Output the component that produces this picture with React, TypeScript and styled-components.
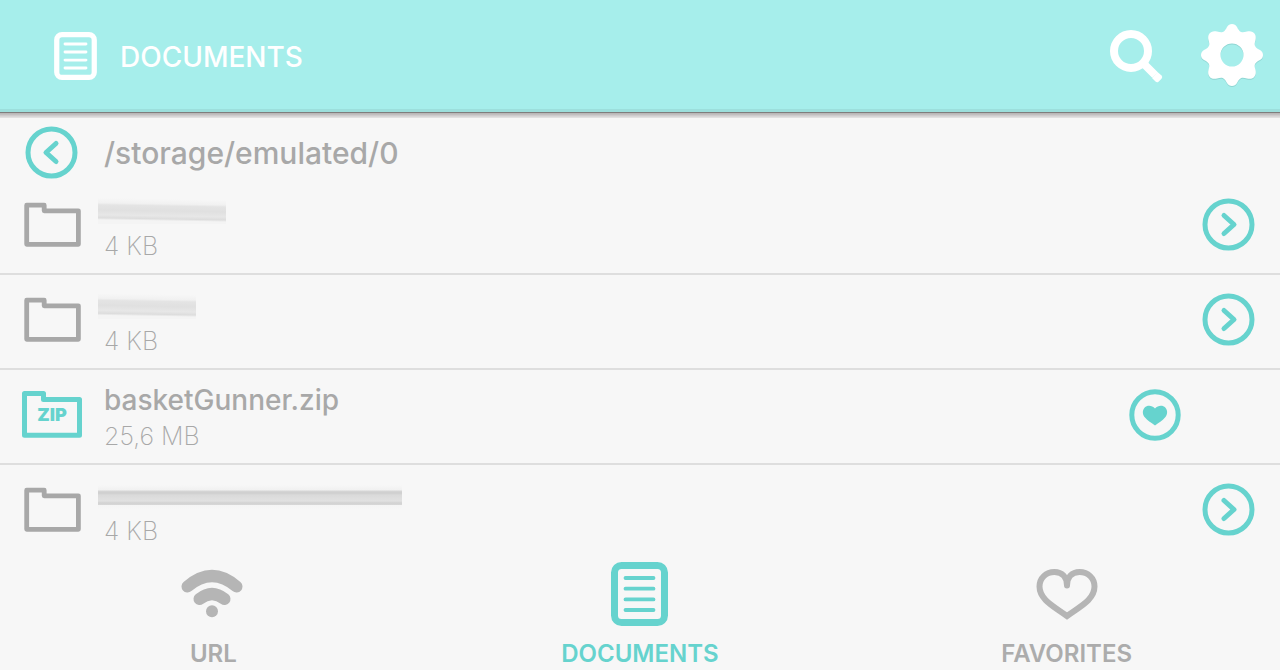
import React from "react";
import styled, { createGlobalStyle } from "styled-components";

const TEAL = "#66d3ce";
const GRAY = "#a8a8a8";

const GlobalStyle = createGlobalStyle`
  * { box-sizing: border-box; }
  body { margin: 0; background: #f7f7f7; font-family: Inter, "Liberation Sans", sans-serif; }
`;

const Page = styled.div`
  min-height: 100vh;
  display: flex;
  flex-direction: column;
  background: #f7f7f7;
  color: ${GRAY};
`;

const Header = styled.header`
  display: flex;
  align-items: center;
  height: 113px;
  padding: 0 16px 0 54px;
  background: linear-gradient(#a6eeeb, #a6eeeb) 0 0 / 100% 109px no-repeat #9cdfdc;
  border-bottom: 1px solid #7f7d7d;
  box-shadow: 0 1px 0 #b9b7b7, 0 2px 0 #c1bfc0, 0 3px 0 #cdcbcc, 0 4px 0 #d8d6d7, 0 5px 0 #e2e1e1;
  color: #fff;
`;

const Title = styled.h1`
  flex: 1;
  margin: 0 0 0 23px;
  padding-top: 2px;
  font-size: 28px;
  line-height: 36px;
  font-weight: 500;
`;

const IconButton = styled.button`
  display: block;
  flex: none;
  padding: 0;
  border: 0;
  background: none;
  color: inherit;
  cursor: pointer;
  svg { display: block; }
`;

const HeaderActions = styled.div`
  display: flex;
  align-items: center;
  gap: 37px;
`;

const PathBar = styled.div`
  display: flex;
  align-items: flex-start;
  gap: 26px;
  height: 67px;
  padding: 13px 25px 0;
`;

const PathText = styled.div`
  font-size: 30px;
  line-height: 54px;
  font-weight: 500;
`;

const FileList = styled.ul`
  flex: 1;
  margin: 0;
  padding: 0;
  list-style: none;
`;

const Row = styled.li`
  display: flex;
  height: 95px;
  padding: 12px 25px 0 21px;
  border-bottom: 2px solid #dedede;
  &:last-child { height: 93px; border-bottom: 0; }
`;

const Thumb = styled.div`
  flex: none;
  width: 62px;
  padding-top: 8px;
  svg { display: block; }
`;

const Info = styled.div`
  flex: 1;
  padding-left: 21px;
`;

const FileName = styled.div`
  height: 36px;
  font-size: 28px;
  line-height: 36px;
  font-weight: 500;
`;

const FileSize = styled.div`
  font-size: 25px;
  line-height: 36px;
  font-weight: 200;
`;

const Redacted = styled.span<{ $width: number; $dark?: boolean }>`
  display: block;
  width: ${(p) => p.$width}px;
  height: 32px;
  margin-left: -6px;
  background: ${(p) =>
    p.$dark
      ? "linear-gradient(180deg, #f7f7f7 8px, #f1f1f1 13px, #d6d6d6 14px, #cecece 16px, #dadada 18px, #e1e1e1 24px, #d2d2d2 26px, #d8d8d8 28px, #f5f5f5 28px, #f7f7f7 32px)"
      : "linear-gradient(181deg, #f7f7f7 8px, #f1f1f1 13px, #e4e4e4 15px, #e0e0e0 20px, #e7e7e7 25px, #dddddd 28px, #f4f4f4 30px)"};
`;

const Actions = styled.div<{ $inset?: boolean }>`
  flex: none;
  padding-top: 6px;
  margin-right: ${(p) => (p.$inset ? 74 : 0)}px;
  color: ${TEAL};
`;

const Nav = styled.nav`
  display: grid;
  grid-template-columns: repeat(3, 1fr);
  height: 112px;
  padding-top: 4px;
`;

const Tab = styled.a<{ $active?: boolean }>`
  display: flex;
  flex-direction: column;
  align-items: center;
  gap: 14px;
  color: ${(p) => (p.$active ? TEAL : "#acacac")};
  font-size: 24px;
  line-height: 28px;
  font-weight: 600;
  text-decoration: none;
`;

const DocIcon = ({ width, height }: { width: number; height: number }) => (
  <svg width={width} height={height} viewBox="0 0 57 64" fill="none" stroke="currentColor" aria-hidden="true">
    <rect x="3.5" y="3.5" width="50" height="57" rx="7" strokeWidth="7" />
    <path d="M14.5 16H42.5M14.5 26.7H42.5M14.5 37.4H42.5M14.5 48H42.5" strokeWidth="3.8" strokeLinecap="round" />
  </svg>
);

const SearchIcon = () => (
  <svg width="54" height="54" viewBox="0 0 54 54" fill="none" stroke="currentColor" aria-hidden="true">
    <circle cx="22" cy="22" r="17" strokeWidth="8" />
    <path d="M35 35L46 46" strokeWidth="8" />
    <path
      d="M43 49L46.500 52.500Q48 54 49.500 52.700L52.500 49.700Q54 48 52.500 46.500L48.500 43Z"
      fill="currentColor"
      stroke="none"
    />
  </svg>
);

const GearIcon = () => (
  <svg width="64" height="66" viewBox="-32 -32 64 66" aria-hidden="true">
    <defs>
      <path
        id="gear"
        fillRule="evenodd"
        d="M-5 -28C-3 -32 3 -32 5 -28C8 -22 10 -22 15 -23.500C21 -25 25 -21 23.500 -15C22 -10 22 -8 28 -5C32 -3 32 3 28 5C22 8 22 10 23.500 15C25 21 21 25 15 23.500C10 22 8 22 5 28C3 32 -3 32 -5 28C-8 22 -10 22 -15 23.500C-21 25 -25 21 -23.500 15C-22 10 -22 8 -28 5C-32 3 -32 -3 -28 -5C-22 -8 -22 -10 -23.500 -15C-25 -21 -21 -25 -15 -23.500C-10 -22 -8 -22 -5 -28ZM0 -11.500A11.500 11.500 0 1 0 0 11.500A11.500 11.500 0 1 0 0 -11.500Z"
      />
    </defs>
    <use href="#gear" y="1" fill="#8fd6d3" />
    <use href="#gear" fill="#fff" />
  </svg>
);

const ChevronCircle = ({ back }: { back?: boolean }) => (
  <svg width="53" height="53" viewBox="0 0 53 53" fill="none" stroke={TEAL} strokeWidth="5" aria-hidden="true">
    <circle cx="26.5" cy="26.5" r="23.5" />
    <path d={back ? "M31 17.500L21 26.500L31 35.500" : "M22 17.500L32 26.500L22 35.500"} strokeLinecap="round" strokeLinejoin="round" />
  </svg>
);

const HeartCircle = () => (
  <svg width="52" height="53" viewBox="0 0 52 53" aria-hidden="true">
    <circle cx="26" cy="27" r="23.2" fill="none" stroke={TEAL} strokeWidth="5" />
    <path
      fill={TEAL}
      d="M26 20.500C29 16.800 34 17 36.300 19.400C39 22.300 38.600 26.500 36 29.600C33.500 32.600 29.500 35 26 37.500C22.500 35 18.500 32.600 16 29.600C13.400 26.500 13 22.300 15.700 19.400C18 17 23 16.800 26 20.500Z"
    />
  </svg>
);

const FolderIcon = () => (
  <svg width="62" height="50" viewBox="0 0 62 50" fill="none" stroke={GRAY} strokeWidth="4.800" strokeLinejoin="round" aria-hidden="true">
    <path d="M5.700 5.200H23.200V10.800H57.400V44.300H5.700Z" />
  </svg>
);

const ZipIcon = () => (
  <svg width="62" height="50" viewBox="0 0 62 50" aria-hidden="true">
    <path d="M3.500 3.500H22.500V9.500H58.500V45.300H3.500Z" fill="none" stroke={TEAL} strokeWidth="5" strokeLinejoin="round" />
    <text x="31" y="31" textAnchor="middle" fontSize="18" fontWeight="900" fill={TEAL}>ZIP</text>
  </svg>
);

const WifiIcon = () => (
  <svg width="64" height="64" viewBox="0 0 64 64" fill="none" stroke="#b5b5b5" strokeLinecap="round" aria-hidden="true">
    <path d="M6.500 24.500Q31 3.500 55.500 24.500" strokeWidth="12" />
    <path d="M18.500 37Q31 27 43.500 37" strokeWidth="12" />
    <circle cx="31" cy="49.200" r="6" fill="#b5b5b5" stroke="none" />
  </svg>
);

const HeartIcon = () => (
  <svg width="64" height="64" viewBox="0 0 64 64" fill="none" stroke="#b5b5b5" strokeWidth="6" strokeLinecap="round" aria-hidden="true">
    <path d="M32 23.500C32 15 27 10 19.500 10C11 10 4.500 16 4.500 24.500C4.500 38 20 45 32 54C44 45 59.500 38 59.500 24.500C59.500 16 53 10 44.500 10C37 10 32 15 32 23.500" />
  </svg>
);

type Entry = { kind: "folder" | "zip"; name?: string; size: string; redacted?: number; dark?: boolean };

const entries: Entry[] = [
  { kind: "folder", size: "4 KB", redacted: 128 },
  { kind: "folder", size: "4 KB", redacted: 98 },
  { kind: "zip", name: "basketGunner.zip", size: "25,6 MB" },
  { kind: "folder", size: "4 KB", redacted: 304, dark: true },
];

export default function App() {
  return (
    <Page>
      <GlobalStyle />
      <Header>
        <DocIcon width={43} height={48} />
        <Title>DOCUMENTS</Title>
        <HeaderActions>
          <IconButton aria-label="Search"><SearchIcon /></IconButton>
          <IconButton aria-label="Settings"><GearIcon /></IconButton>
        </HeaderActions>
      </Header>
      <PathBar>
        <IconButton aria-label="Back"><ChevronCircle back /></IconButton>
        <PathText>/storage/emulated/0</PathText>
      </PathBar>
      <FileList>
        {entries.map((e, i) => (
          <Row key={i}>
            <Thumb>{e.kind === "zip" ? <ZipIcon /> : <FolderIcon />}</Thumb>
            <Info>
              <FileName>{e.name ?? <Redacted $width={e.redacted ?? 0} $dark={e.dark} />}</FileName>
              <FileSize>{e.size}</FileSize>
            </Info>
            <Actions $inset={e.kind === "zip"}>
              <IconButton aria-label={e.kind === "zip" ? "Favorite" : "Open"}>
                {e.kind === "zip" ? <HeartCircle /> : <ChevronCircle />}
              </IconButton>
            </Actions>
          </Row>
        ))}
      </FileList>
      <Nav>
        <Tab href="#url"><WifiIcon />URL</Tab>
        <Tab href="#documents" $active><DocIcon width={57} height={64} />DOCUMENTS</Tab>
        <Tab href="#favorites"><HeartIcon />FAVORITES</Tab>
      </Nav>
    </Page>
  );
}
